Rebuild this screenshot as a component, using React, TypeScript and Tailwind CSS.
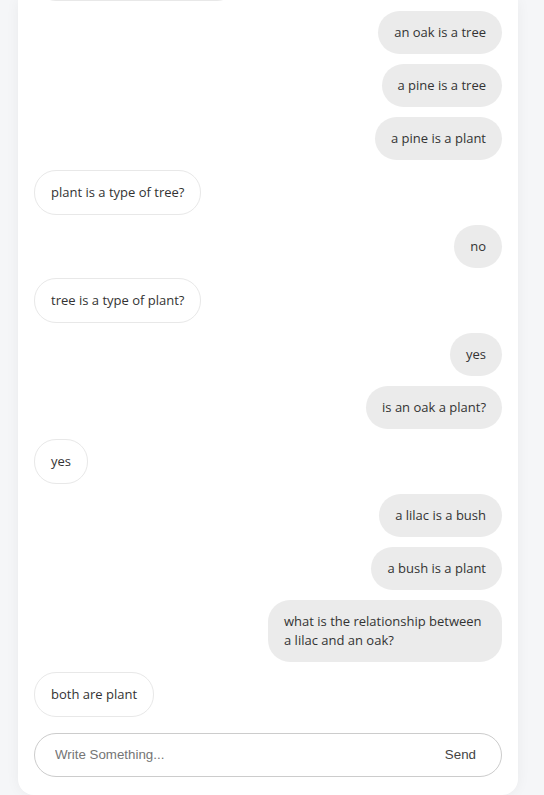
import React, { useState } from "react";

type Msg = { text: string; mine: boolean };

const messages: Msg[] = [
  { text: "what kind of thing is an oak?", mine: false },
  { text: "an oak is a tree", mine: true },
  { text: "a pine is a tree", mine: true },
  { text: "a pine is a plant", mine: true },
  { text: "plant is a type of tree?", mine: false },
  { text: "no", mine: true },
  { text: "tree is a type of plant?", mine: false },
  { text: "yes", mine: true },
  { text: "is an oak a plant?", mine: true },
  { text: "yes", mine: false },
  { text: "a lilac is a bush", mine: true },
  { text: "a bush is a plant", mine: true },
  { text: "what is the relationship between a lilac and an oak?", mine: true },
  { text: "both are plant", mine: false },
];

const Bubble: React.FC<{ msg: Msg }> = ({ msg }) => (
  <div className={`flex ${msg.mine ? "justify-end" : "justify-start"}`}>
    <div
      className={`max-w-[234px] rounded-[22px] px-4 py-3 text-[13px] leading-[19px] text-[#333] ${
        msg.mine ? "bg-[#ebebeb]" : "border border-[#e8e8e8] bg-white"
      }`}
    >
      {msg.text}
    </div>
  </div>
);

export default function App() {
  const [value, setValue] = useState("");
  return (
    <div
      className="h-[795px] overflow-hidden bg-[#f5f6f8]"
      style={{ fontFamily: '"Open Sans", "Noto Sans", sans-serif' }}
    >
      <div className="ml-[18px] flex h-full w-[500px] flex-col rounded-b-2xl bg-white shadow-[0_0_14px_rgba(0,0,0,0.05)]">
        <div className="flex flex-1 flex-col justify-end gap-[10px] overflow-hidden px-4">
          {messages.map((m, i) => (
            <Bubble key={i} msg={m} />
          ))}
        </div>
        <div className="px-4 pb-[18px] pt-4">
          <div className="flex h-11 items-center rounded-full border border-[#cccccc] bg-white">
            <input
              autoFocus
              value={value}
              onChange={(e) => setValue(e.target.value)}
              placeholder="Write Something..."
              className="min-w-0 flex-1 bg-transparent pl-5 text-[13.33px] text-[#333] outline-none placeholder:text-[#757575]"
              style={{ fontFamily: '"Liberation Sans", Arial, sans-serif' }}
            />
            <button
              className="pl-4 pr-[25px] text-[13.33px] text-[#444]"
              style={{ fontFamily: '"Liberation Sans", Arial, sans-serif' }}
            >
              Send
            </button>
          </div>
        </div>
      </div>
    </div>
  );
}
